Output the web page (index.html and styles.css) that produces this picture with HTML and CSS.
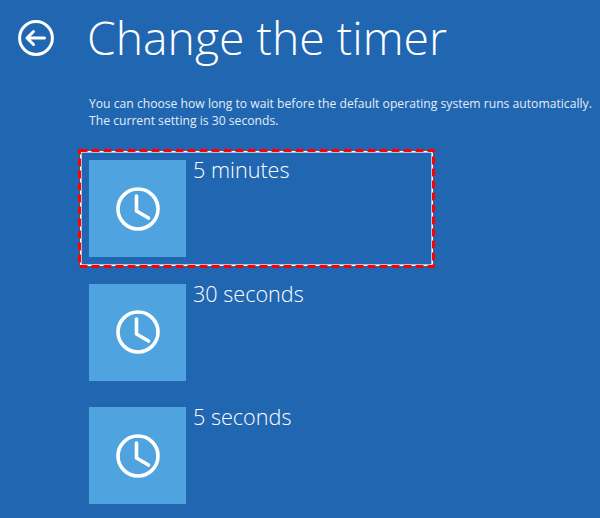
FILE: index.html
```html
<!DOCTYPE html>
<html lang="en">
<head>
    <meta charset="UTF-8">
    <title>Change the timer</title>
    <link rel="stylesheet" href="styles.css">
</head>
<body>
    <div class="header">
        <svg class="back-icon" width="36" height="36" viewBox="0 0 36 36">
            <circle cx="18" cy="18" r="16.4" />
            <path d="M26.5 18H9M15.5 11.5L9 18l6.500 6.500" />
        </svg>
        <h1>Change the timer</h1>
    </div>

    <p class="description">You can choose how long to wait before the default operating system runs automatically.<br>The current setting is 30 seconds.</p>

    <div class="options">
        <div class="option selected">
            <div class="tile">
                <svg class="clock-icon" width="44" height="44" viewBox="0 0 44 44">
                    <circle cx="22" cy="22" r="20" />
                    <path d="M20.500 9v15l12 7" />
                </svg>
            </div>
            <div class="label">5 minutes</div>
            <svg class="dashes" width="357" height="119">
                <rect class="dashes-white" x="2.800" y="2.800" width="351.400" height="113.400" />
                <rect class="dashes-red" x="1.500" y="1.500" width="354" height="116" />
            </svg>
        </div>
        <div class="option">
            <div class="tile">
                <svg class="clock-icon" width="44" height="44" viewBox="0 0 44 44">
                    <circle cx="22" cy="22" r="20" />
                    <path d="M20.500 9v15l12 7" />
                </svg>
            </div>
            <div class="label">30 seconds</div>
        </div>
        <div class="option">
            <div class="tile">
                <svg class="clock-icon" width="44" height="44" viewBox="0 0 44 44">
                    <circle cx="22" cy="22" r="20" />
                    <path d="M20.500 9v15l12 7" />
                </svg>
            </div>
            <div class="label">5 seconds</div>
        </div>
    </div>
</body>
</html>
```

FILE: styles.css
```css
body {
    margin: 0;
    height: 518px;
    overflow: hidden;
    background: #2166b1;
    color: #fff;
    font-family: "Open Sans", "Noto Sans", sans-serif;
}
.header {
    display: flex;
    align-items: center;
    height: 75px;
    padding-left: 18px;
}
.back-icon {
    fill: none;
    stroke: #fff;
    stroke-width: 3;
    margin-right: 33px;
}
.back-icon path {
    stroke-linecap: round;
    stroke-linejoin: round;
}
h1 {
    margin: 0;
    font-size: 46.3px;
    font-weight: 300;
    line-height: 75px;
}
.description {
    margin: 20px 0 0 89px;
    font-size: 12.17px;
    line-height: 17px;
    white-space: nowrap;
    color: #e3edf7;
}
.options {
    margin-top: 20px;
    padding-left: 78px;
}
.option {
    position: relative;
    display: flex;
    gap: 7px;
    width: 357px;
    height: 119px;
    box-sizing: border-box;
    padding: 11px 11px 0;
    margin-bottom: 4.500px;
}
.dashes {
    position: absolute;
    left: 0;
    top: 0;
    fill: none;
}
.dashes-white {
    stroke: #fff;
    stroke-width: 1.600;
}
.dashes-red {
    stroke: #f00;
    stroke-width: 3;
    stroke-dasharray: 8 4;
}
.tile {
    display: flex;
    align-items: center;
    justify-content: center;
    width: 97px;
    height: 97px;
    background: #4fa3de;
}
.clock-icon {
    fill: none;
    stroke: #fff;
    stroke-width: 3.600;
}
.clock-icon path {
    stroke-linecap: round;
    stroke-linejoin: round;
}
.label {
    font-size: 21.600px;
    font-weight: 300;
    line-height: 20px;
}
```
